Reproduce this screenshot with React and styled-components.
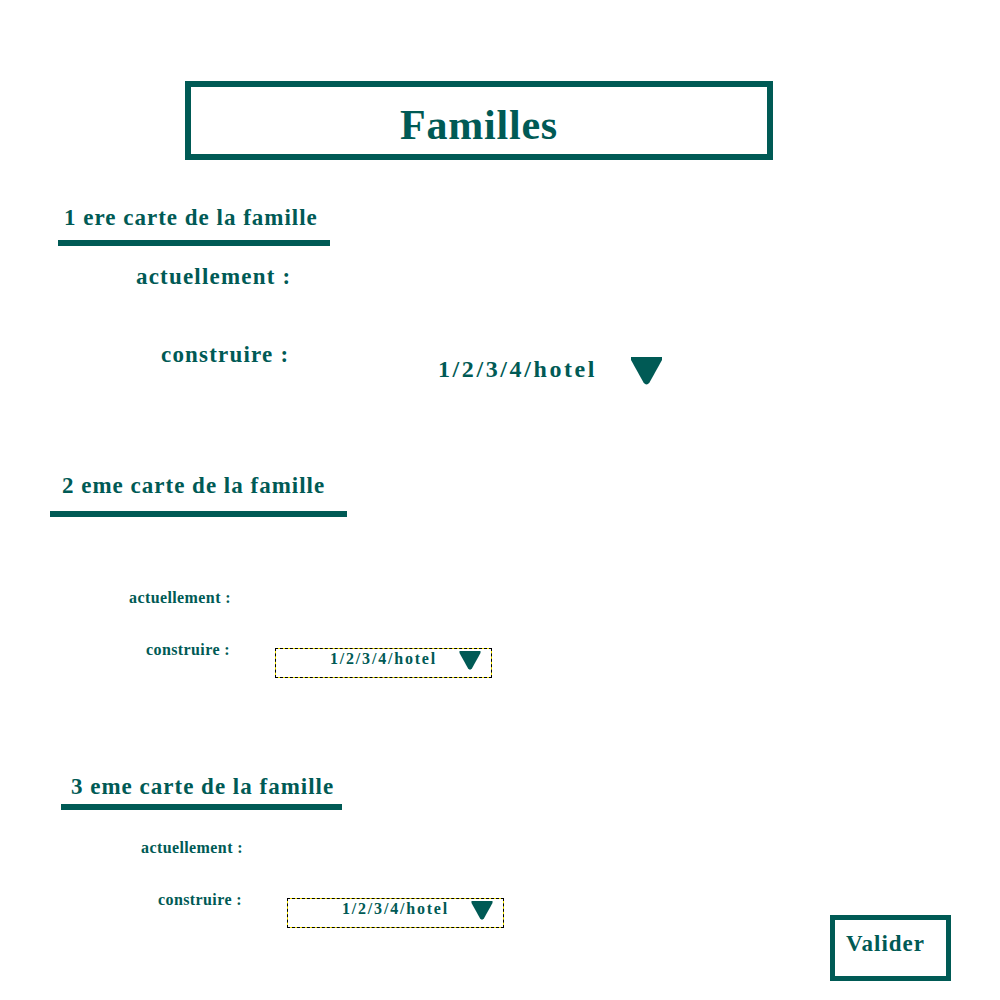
import React from "react";
import styled, { createGlobalStyle } from "styled-components";

const teal = "#005a55";

const GlobalStyle = createGlobalStyle`
  html, body {
    margin: 0;
    padding: 0;
    background: #ffffff;
  }
  body {
    font-family: "Liberation Serif", "Times New Roman", serif;
    color: ${teal};
  }
`;

const Page = styled.div`
  width: 1000px;
  height: 1000px;
  display: flex;
  flex-direction: column;
  padding-top: 81px;
  box-sizing: border-box;
  overflow: hidden;
`;

const TitleBox = styled.div`
  margin-left: 185px;
  width: 588px;
  height: 79px;
  box-sizing: border-box;
  border: 6px solid ${teal};
  display: flex;
  align-items: center;
  justify-content: center;
  padding-top: 8px;
`;

const Title = styled.h1`
  margin: 0;
  font-size: 42px;
  font-weight: 700;
  letter-spacing: 0.8px;
  line-height: 1;
`;

const Heading = styled.h2`
  margin: ${(p) => p.$top}px 0 0 ${(p) => p.$left}px;
  width: ${(p) => p.$width}px;
  box-sizing: border-box;
  padding: 0 0 ${(p) => p.$below}px ${(p) => p.$indent}px;
  border-bottom: 6px solid ${teal};
  font-size: 23px;
  font-weight: 700;
  letter-spacing: 1px;
  line-height: 30px;
  white-space: nowrap;
`;

const Row = styled.div`
  display: flex;
  align-items: flex-start;
  margin-top: ${(p) => p.$top}px;
  padding-left: ${(p) => p.$left}px;
  padding-right: 49px;
`;

const Label = styled.span`
  display: block;
  width: ${(p) => (p.$width ? `${p.$width}px` : "auto")};
  font-weight: 700;
  font-size: ${(p) => (p.$small ? 16 : 23)}px;
  letter-spacing: ${(p) => (p.$small ? 0.4 : 1.2)}px;
  line-height: ${(p) => (p.$small ? 20 : 30)}px;
  white-space: nowrap;
`;

const BigSelect = styled.div`
  display: flex;
  align-items: center;
  gap: 34px;
  margin-top: 13px;
  font-size: 24px;
  font-weight: 700;
  letter-spacing: 2.6px;
  line-height: 30px;

  svg {
    width: 31px;
    height: 28px;
    margin-top: 4px;
  }
`;

const SmallSelect = styled.div`
  position: relative;
  width: 217px;
  height: 30px;
  box-sizing: border-box;
  margin-top: 8px;
  border: 1px dashed #000;
  background: linear-gradient(#fff, #fff) padding-box, #f5e600 border-box;
  font-size: 16px;
  font-weight: 700;
  letter-spacing: 1.8px;
  line-height: 20px;
  text-align: center;

  span {
    display: block;
  }

  svg {
    position: absolute;
    right: 10px;
    top: 2px;
    width: 22px;
    height: 19px;
  }
`;

const ValiderButton = styled.button`
  margin-left: auto;
  margin-top: 25px;
  width: 121px;
  height: 66px;
  box-sizing: border-box;
  border: 5px solid ${teal};
  background: #fff;
  color: ${teal};
  font-family: "Liberation Serif", "Times New Roman", serif;
  font-size: 23px;
  font-weight: 700;
  letter-spacing: 1px;
  text-align: left;
  padding: 0 0 8px 11px;
  cursor: pointer;
`;

function Arrow() {
  return (
    <svg viewBox="0 0 31 28" aria-hidden="true">
      <path d="M0 0 H31 V3 L18.5 25.5 Q15.5 29.5 12.5 25.5 L0 3 Z" fill={teal} />
    </svg>
  );
}

function Select({ small }) {
  if (small) {
    return (
      <SmallSelect>
        <span>1/2/3/4/hotel</span>
        <Arrow />
      </SmallSelect>
    );
  }
  return (
    <BigSelect>
      <span>1/2/3/4/hotel</span>
      <Arrow />
    </BigSelect>
  );
}

export default function App() {
  return (
    <>
      <GlobalStyle />
      <Page>
        <TitleBox>
          <Title>Familles</Title>
        </TitleBox>

        <Heading $top={43} $left={58} $width={272} $indent={6} $below={7}>
          1 ere carte de la famille
        </Heading>
        <Row $top={16} $left={136}>
          <Label>actuellement :</Label>
        </Row>
        <Row $top={48} $left={161}>
          <Label $width={277}>construire :</Label>
          <Select />
        </Row>

        <Heading $top={86} $left={50} $width={297} $indent={12} $below={10}>
          2 eme carte de la famille
        </Heading>
        <Row $top={71} $left={129}>
          <Label $small>actuellement :</Label>
        </Row>
        <Row $top={32} $left={146}>
          <Label $small $width={129}>construire :</Label>
          <Select small />
        </Row>

        <Heading $top={94} $left={61} $width={281} $indent={10} $below={2}>
          3 eme carte de la famille
        </Heading>
        <Row $top={28} $left={141}>
          <Label $small>actuellement :</Label>
        </Row>
        <Row $top={32} $left={158}>
          <Label $small $width={129}>construire :</Label>
          <Select small />
          <ValiderButton>Valider</ValiderButton>
        </Row>
      </Page>
    </>
  );
}
